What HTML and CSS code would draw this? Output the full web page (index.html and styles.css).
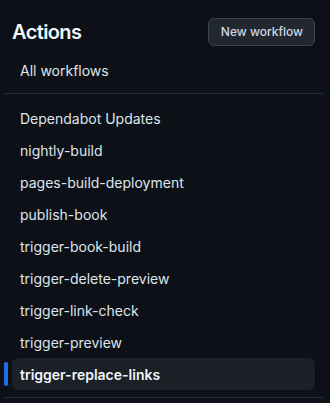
FILE: index.html
```html
<!DOCTYPE html>
<html lang="en">
<head>
<meta charset="utf-8">
<title>Actions</title>
<link rel="stylesheet" href="styles.css">
</head>
<body>
<nav class="sidebar">
  <div class="header">
    <h2 class="title">Actions</h2>
    <button class="btn" type="button">New workflow</button>
  </div>
  <ul class="list">
    <li class="item"><span class="label">All workflows</span></li>
  </ul>
  <div class="divider"></div>
  <ul class="list">
    <li class="item"><span class="label">Dependabot Updates</span></li>
    <li class="item"><span class="label">nightly-build</span></li>
    <li class="item"><span class="label">pages-build-deployment</span></li>
    <li class="item"><span class="label">publish-book</span></li>
    <li class="item"><span class="label">trigger-book-build</span></li>
    <li class="item"><span class="label">trigger-delete-preview</span></li>
    <li class="item"><span class="label">trigger-link-check</span></li>
    <li class="item"><span class="label">trigger-preview</span></li>
    <li class="item selected"><span class="label">trigger-replace-links</span></li>
  </ul>
  <div class="divider bottom"></div>
</nav>
</body>
</html>
```
FILE: styles.css
```css
* { box-sizing: border-box; }
html, body {
  margin: 0;
  padding: 0;
  background: #0d1117;
  color: #e6edf3;
  font-family: Inter, "Noto Sans", "Liberation Sans", sans-serif;
  -webkit-font-smoothing: antialiased;
}
.sidebar {
  width: 330px;
  padding: 18px 7px 0 4px;
}
.header {
  display: flex;
  align-items: center;
  justify-content: space-between;
  height: 28px;
  padding: 0 8px;
  margin-bottom: 8px;
}
.title {
  margin: 0;
  font-size: 20px;
  font-weight: 600;
  line-height: 28px;
  color: #f0f6fc;
  letter-spacing: -0.6px;
}
.btn {
  height: 28px;
  padding: 0 11px 0 12px;
  border: 1px solid #3d444d;
  border-radius: 6px;
  background: #212830;
  color: #d1d7e0;
  font-family: inherit;
  font-size: 12px;
  font-weight: 500;
  line-height: 26px;
}
.list {
  list-style: none;
  margin: 0 8px;
  padding: 0;
}
.item {
  position: relative;
  height: 32px;
  display: flex;
  align-items: center;
  padding: 0 8px;
  border-radius: 6px;
  font-size: 14px;
  color: #dfe5ec;
}
.item.selected {
  background: #1b1f26;
  font-weight: 600;
  color: #f0f6fc;
}
.item.selected::before {
  content: "";
  position: absolute;
  left: -8px;
  top: 4px;
  width: 4px;
  height: 24px;
  border-radius: 6px;
  background: #1f6feb;
}
.divider {
  height: 1px;
  background: #262c36;
  margin: 7px 0 8px;
}
.divider.bottom {
  margin: 7px 0 0;
}
```
